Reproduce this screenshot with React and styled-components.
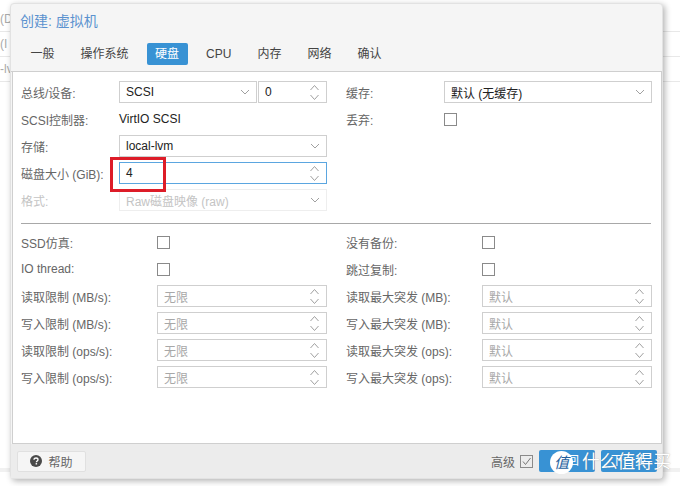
import styled, {createGlobalStyle} from "styled-components";

const GlobalStyle = createGlobalStyle`
  html, body {
    margin: 0;
    padding: 0;
    background: #fff;
  }
  body {
    font-family: "Liberation Sans", "Noto Sans CJK SC", sans-serif;
    font-size: 12px;
    color: #222;
  }
`;

const Page = styled.div`
  position: relative;
  width: 680px;
  height: 486px;
  overflow: hidden;
  background: #fff;
`;

const BackRow = styled.div`
  height: 24px;
  line-height: 24px;
  margin-top: ${(props) => props.first ? "7px" : "0"};
  border-bottom: 1px solid #e8e8e8;
  color: #aaa;
  font-size: 12px;
  white-space: nowrap;

  &:last-of-type {
    border-bottom: none;
  }
`;

const BackBand = styled.div`
  position: absolute;
  left: 0;
  right: 0;
  top: 468px;
  height: 4px;
  background: #f1f1f1;
`;

const Modal = styled.div`
  position: absolute;
  left: 10px;
  top: 3px;
  width: 653px;
  height: 476px;
  display: flex;
  flex-direction: column;
  box-sizing: border-box;
  background: #f5f5f5;
  border-radius: 4px;
  border: 1px solid #e2e2e2;
  box-shadow: 2px 2px 6px rgba(0, 0, 0, 0.3);
`;

const Title = styled.div`
  height: 39px;
  padding: 8px 0 0 9px;
  box-sizing: border-box;
  color: #5b92cf;
  font-size: 14px;
  line-height: 18px;
`;

const TabBar = styled.div`
  display: flex;
  height: 29px;
  padding: 0 0 0 12px;
  box-sizing: border-box;
  gap: 11px;
  border-bottom: 1px solid #cfcfcf;
`;

const Tab = styled.div`
  height: 22px;
  line-height: 22px;
  padding: 0 ${(props) => props.active ? "8.5px" : "7.5px"} 0 ${(props) => props.active ? "8px" : "7.5px"};
  border-radius: 2px;
  color: ${(props) => props.active ? "#fff" : "#444"};
  background: ${(props) => props.active ? "#3892d4" : "transparent"};
`;

const Body = styled.div`
  flex: 1;
  margin: 0 0 0 1px;
  padding: 9px 10px 0 8px;
  background: #fff;
  border-left: 1px solid #cfcfcf;
  border-right: 1px solid #cfcfcf;
  border-bottom: 1px solid #cfcfcf;
`;

const Columns = styled.div`
  display: grid;
  grid-template-columns: 306px 306px;
  column-gap: 19px;
`;

const Column = styled.div`
  display: flex;
  flex-direction: column;
  gap: 5px;
`;

const Row = styled.div`
  display: flex;
  align-items: center;
  height: 22px;
`;

const Label = styled.div`
  width: ${(props) => props.wide ? "136px" : "98px"};
  flex: none;
  color: ${(props) => props.faded ? "#c4c4c4" : "#666"};
  white-space: nowrap;
`;

const Value = styled.div`
  color: #222;
`;

const Field = styled.div`
  flex: ${(props) => props.fixed ? "none" : "1"};
  width: ${(props) => props.fixed ? "69px" : "auto"};
  height: 22px;
  display: flex;
  align-items: center;
  justify-content: space-between;
  box-sizing: border-box;
  padding: 0 6px;
  margin-left: ${(props) => props.fixed ? "1px" : "0"};
  background: #fff;
  border: 1px solid ${(props) => props.focus ? "#5ba6e0" : props.faded ? "#eee" : "#cfcfcf"};
  color: ${(props) => props.faded ? "#c4c4c4" : props.muted ? "#a8a8a8" : "#222"};
`;

const Check = styled.div`
  width: 11px;
  height: 11px;
  background: #fff;
  border: 1px solid #8a8a8a;
`;

const Divider = styled.div`
  height: 1px;
  background: #a8a8a8;
  margin: 12px 0 7px;
`;

const Footer = styled.div`
  height: 34px;
  flex: none;
  display: flex;
  align-items: center;
  padding: 0 5px 0 6px;
  background: #ececec;
`;

const HelpButton = styled.div`
  width: 69px;
  height: 21px;
  display: flex;
  align-items: center;
  justify-content: center;
  gap: 6px;
  box-sizing: border-box;
  background: #f5f5f5;
  border: 1px solid #e0e0e0;
  border-radius: 2px;
  color: #666;
`;

const Advanced = styled.div`
  margin-left: auto;
  display: flex;
  align-items: center;
  gap: 5px;
  margin-right: 6px;
  color: #666;
`;

const AdvancedBox = styled.div`
  width: 11px;
  height: 11px;
  border: 1px solid #8a8a8a;
  display: flex;
  align-items: center;
  justify-content: center;
`;

const BlueButton = styled.div`
  width: 56px;
  height: 22px;
  line-height: 22px;
  text-align: center;
  background: #3892d4;
  border-radius: 2px;
  color: #fff;
  margin-left: ${(props) => props.next ? "6px" : "0"};
`;

const Badge = styled.div`
  position: absolute;
  left: 550px;
  top: 451px;
  width: 23px;
  height: 23px;
  border-radius: 50%;
  background: #fff;
  color: #1f5f9e;
  font-size: 15px;
  font-style: italic;
  line-height: 23px;
  text-align: center;
`;

const Watermark = styled.div`
  position: absolute;
  left: 582px;
  top: 451px;
  color: #fff;
  font-size: 17.8px;
  line-height: 22px;
  white-space: nowrap;
  text-shadow: 0 0 1px rgba(90, 90, 90, 0.5);
`;

const HighlightBox = styled.div`
  position: absolute;
  left: 110px;
  top: 157px;
  width: 56px;
  height: 35px;
  box-sizing: border-box;
  border: 3px solid #dd1c28;
`;

function Spinner() {
    return (
        <svg width="11" height="17" viewBox="0 0 11 17" fill="none" stroke="#a0a0a0" strokeWidth="1">
            <path d="M1.5 6 5.5 1.5 9.5 6M1.5 11 5.5 15.5 9.5 11"/>
        </svg>
    );
}

function Arrow() {
    return (
        <svg width="10" height="6" viewBox="0 0 10 6" fill="none" stroke="#a0a0a0" strokeWidth="1">
            <path d="M1 1 5 5 9 1"/>
        </svg>
    );
}

function HelpIcon() {
    return (
        <svg width="12" height="12" viewBox="0 0 12 12">
            <circle cx="6" cy="6" r="6" fill="#4a4a4a"/>
            <path d="M4 4.7C4 3.4 5 3 6 3s2 .6 2 1.7c0 1.3-1.6 1.3-1.6 2.5" fill="none" stroke="#fff" strokeWidth="1.3"/>
            <rect x="5.6" y="8.1" width="1.5" height="1.4" fill="#fff"/>
        </svg>
    );
}

function FieldRow({label, value}) {
    return (
        <Row>
            <Label wide>{label}</Label>
            <Field muted>{value}<Spinner/></Field>
        </Row>
    );
}

function CheckRow({label}) {
    return (
        <Row>
            <Label wide>{label}</Label>
            <Check/>
        </Row>
    );
}

const tabs = ["一般", "操作系统", "硬盘", "CPU", "内存", "网络", "确认"];
const leftLimits = ["读取限制 (MB/s):", "写入限制 (MB/s):", "读取限制 (ops/s):", "写入限制 (ops/s):"];
const rightLimits = ["读取最大突发 (MB):", "写入最大突发 (MB):", "读取最大突发 (ops):", "写入最大突发 (ops):"];

export default function App() {
    return (
        <Page>
            <GlobalStyle/>
            <BackRow first>(D</BackRow>
            <BackRow>(I</BackRow>
            <BackRow>-lv</BackRow>
            <BackBand/>
            <Modal>
                <Title>创建: 虚拟机</Title>
                <TabBar>
                    {tabs.map((tab) => (
                        <Tab key={tab} active={tab === "硬盘"}>{tab}</Tab>
                    ))}
                </TabBar>
                <Body>
                    <Columns>
                        <Column>
                            <Row>
                                <Label>总线/设备:</Label>
                                <Field>SCSI<Arrow/></Field>
                                <Field fixed>0<Spinner/></Field>
                            </Row>
                            <Row>
                                <Label>SCSI控制器:</Label>
                                <Value>VirtIO SCSI</Value>
                            </Row>
                            <Row>
                                <Label>存储:</Label>
                                <Field>local-lvm<Arrow/></Field>
                            </Row>
                            <Row>
                                <Label>磁盘大小 (GiB):</Label>
                                <Field focus>4<Spinner/></Field>
                            </Row>
                            <Row>
                                <Label faded>格式:</Label>
                                <Field faded>Raw磁盘映像 (raw)<Arrow/></Field>
                            </Row>
                        </Column>
                        <Column>
                            <Row>
                                <Label>缓存:</Label>
                                <Field>默认 (无缓存)<Arrow/></Field>
                            </Row>
                            <Row>
                                <Label>丢弃:</Label>
                                <Check/>
                            </Row>
                        </Column>
                    </Columns>
                    <Divider/>
                    <Columns>
                        <Column>
                            <CheckRow label="SSD仿真:"/>
                            <CheckRow label="IO thread:"/>
                            {leftLimits.map((label) => (
                                <FieldRow key={label} label={label} value="无限"/>
                            ))}
                        </Column>
                        <Column>
                            <CheckRow label="没有备份:"/>
                            <CheckRow label="跳过复制:"/>
                            {rightLimits.map((label) => (
                                <FieldRow key={label} label={label} value="默认"/>
                            ))}
                        </Column>
                    </Columns>
                </Body>
                <Footer>
                    <HelpButton><HelpIcon/>帮助</HelpButton>
                    <Advanced>
                        高级
                        <AdvancedBox>
                            <svg width="11" height="11" viewBox="0 0 11 11" fill="none" stroke="#777" strokeWidth="1">
                                <path d="M2 5.5 4.5 8.5 9.5 2"/>
                            </svg>
                        </AdvancedBox>
                    </Advanced>
                    <BlueButton>返回</BlueButton>
                    <BlueButton next>下一步</BlueButton>
                </Footer>
            </Modal>
            <HighlightBox/>
            <Badge>值</Badge>
            <Watermark>什么值得买</Watermark>
        </Page>
    );
}
